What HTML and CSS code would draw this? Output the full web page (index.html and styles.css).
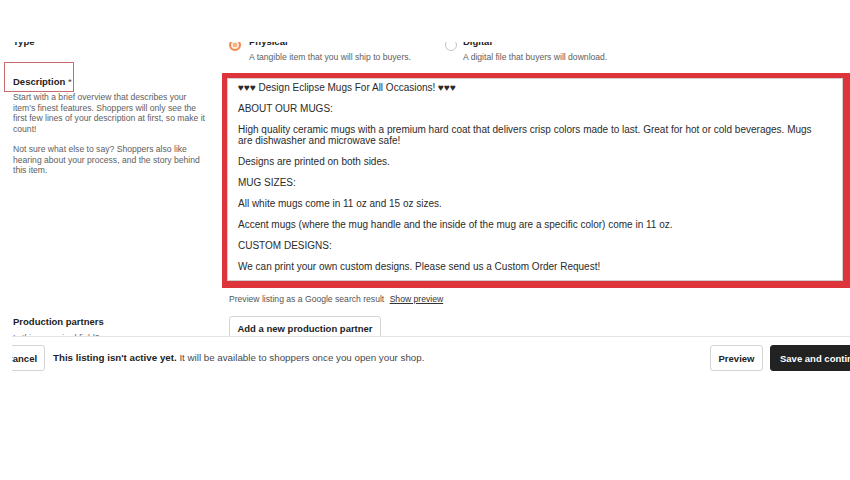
FILE: index.html
```html
<!DOCTYPE html>
<html lang="en">
<head>
<meta charset="utf-8">
<title>Listing description</title>
<link rel="stylesheet" href="styles.css">
</head>
<body>
<div class="topblank"></div>
<main class="form">
  <div class="shift">
    <section class="row type-row">
      <div class="lcol"><div class="title">Type</div></div>
      <div class="options">
        <div class="option opt-physical">
          <span class="radio radio-on"></span>
          <div class="opt-text">
            <div class="title">Physical</div>
            <div class="sub">A tangible item that you will ship to buyers.</div>
          </div>
        </div>
        <div class="option opt-digital">
          <span class="radio"></span>
          <div class="opt-text">
            <div class="title">Digital</div>
            <div class="sub">A digital file that buyers will download.</div>
          </div>
        </div>
      </div>
    </section>

    <section class="row desc-row">
      <div class="lcol">
        <div class="annot">Description <span class="req">*</span></div>
        <p class="help">Start with a brief overview that describes your item's finest features. Shoppers will only see the first few lines of your description at first, so make it count!</p>
        <p class="help help2">Not sure what else to say? Shoppers also like hearing about your process, and the story behind this item.</p>
      </div>
      <div class="rcol">
        <div class="redbox">
          <div class="textarea">
            <p>♥♥♥ Design Eclipse Mugs For All Occasions! ♥♥♥</p>
            <p>ABOUT OUR MUGS:</p>
            <p>High quality ceramic mugs with a premium hard coat that delivers crisp colors made to last. Great for hot or cold beverages. Mugs are dishwasher and microwave safe!</p>
            <p>Designs are printed on both sides.</p>
            <p>MUG SIZES:</p>
            <p>All white mugs come in 11 oz and 15 oz sizes.</p>
            <p>Accent mugs (where the mug handle and the inside of the mug are a specific color) come in 11 oz.</p>
            <p>CUSTOM DESIGNS:</p>
            <p>We can print your own custom designs. Please send us a Custom Order Request!</p>
          </div>
        </div>
        <div class="preview-line">Preview listing as a Google search result <a class="link">Show preview</a></div>
      </div>
    </section>

    <section class="row prod-row">
      <div class="lcol">
        <div class="title">Production partners</div>
        <div class="help">Is this a required field?</div>
      </div>
      <div class="rcol">
        <button class="btn btn-add">Add a new production partner</button>
      </div>
    </section>
  </div>
</main>
<footer class="bar">
  <button class="btn btn-cancel">Cancel</button>
  <div class="msg"><strong>This listing isn't active yet.</strong> It will be available to shoppers once you open your shop.</div>
  <button class="btn btn-preview">Preview</button>
  <button class="btn btn-save">Save and continue</button>
</footer>
</body>
</html>
```

FILE: styles.css
```css
html, body {
  margin: 0;
  padding: 0;
  background: #fff;
}
body {
  width: 850px;
  height: 480px;
  overflow: hidden;
  font-family: "Liberation Sans", Arial, sans-serif;
  color: #222;
}
p { margin: 0; }

.topblank { height: 42px; }

.form {
  height: 294px;
  overflow: hidden;
}
.shift { margin-top: -6px; }

.row {
  display: grid;
  grid-template-columns: 222px 628px;
}
.lcol { padding-left: 13px; }

.title {
  font-size: 9.5px;
  font-weight: bold;
  line-height: 12px;
  color: #222;
}
.sub, .help {
  font-size: 8.6px;
  line-height: 10.5px;
  color: #5e5e5e;
}

/* type row */
.type-row { height: 26px; }
.options {
  display: flex;
  padding-left: 7px;
}
.option {
  display: flex;
  gap: 8px;
}
.opt-physical { width: 216px; }
.opt-digital { gap: 6px; }
.opt-text .title { margin-bottom: 4px; }
.radio {
  width: 12px;
  height: 12px;
  box-sizing: border-box;
  border-radius: 50%;
  border: 1px solid #c4c4c4;
  margin-top: 3px;
  flex-shrink: 0;
}
.radio-on {
  border: 2px solid #ee8a4c;
  background: radial-gradient(circle, #f6b184 0 2px, #fde9dc 2.5px);
}

/* description */
.desc-row { height: 254px; }
.annot {
  margin-left: -9px;
  width: 70px;
  height: 30px;
  box-sizing: border-box;
  border: 1px solid #c96a6f;
  padding: 13px 0 0 8px;
  font-size: 9.5px;
  font-weight: bold;
  line-height: 12px;
  white-space: nowrap;
}
.req { font-weight: normal; color: #444; }
.desc-row .help { width: 196px; }
.help2 { margin-top: 10px; }

.redbox {
  margin-top: 11px;
  border-style: solid;
  border-color: #dd333b;
  border-width: 5px 7px 7px 5px;
}
.textarea {
  border: 1px solid #cfcfcf;
  padding: 3px 16px 8px 10px;
  font-size: 10px;
  line-height: 11px;
  color: #2b2b2b;
}
.textarea p + p { margin-top: 10px; }

.preview-line {
  margin: 6px 0 0 7px;
  font-size: 8.6px;
  line-height: 11px;
  color: #555;
}
.link {
  margin-left: 3px;
  text-decoration: underline;
  color: #333;
}

/* production */
.prod-row .help { margin-top: 5px; }
.btn {
  font-family: "Liberation Sans", Arial, sans-serif;
  font-size: 9.5px;
  font-weight: bold;
  color: #222;
  background: #fff;
  border: 1px solid #d4d4d4;
  border-radius: 3px;
  height: 26px;
  padding: 0 9px;
  cursor: pointer;
}
.btn-add {
  margin-left: 7px;
  width: 152px;
  height: 25px;
  padding: 0;
}

/* footer */
.bar {
  margin-left: 12px;
  border-top: 1px solid #e4e4e4;
  height: 43px;
  box-sizing: border-box;
  padding-top: 8px;
  display: flex;
  align-items: flex-start;
  overflow: hidden;
}
.btn-cancel {
  margin-left: -24px;
  width: 57px;
  padding: 0 0 0 10px;
  flex-shrink: 0;
}
.msg {
  margin-left: 8px;
  font-size: 9.75px;
  line-height: 26px;
  color: #4a4a4a;
  white-space: nowrap;
}
.msg strong { color: #222; }
.btn-preview {
  margin-left: auto;
  width: 53px;
  padding: 0;
  flex-shrink: 0;
}
.btn-save {
  margin-left: 7px;
  flex-shrink: 0;
  background: #222;
  color: #fff;
  border-color: #222;
  margin-right: -30px;
  width: 110px;
  text-align: left;
}
```
